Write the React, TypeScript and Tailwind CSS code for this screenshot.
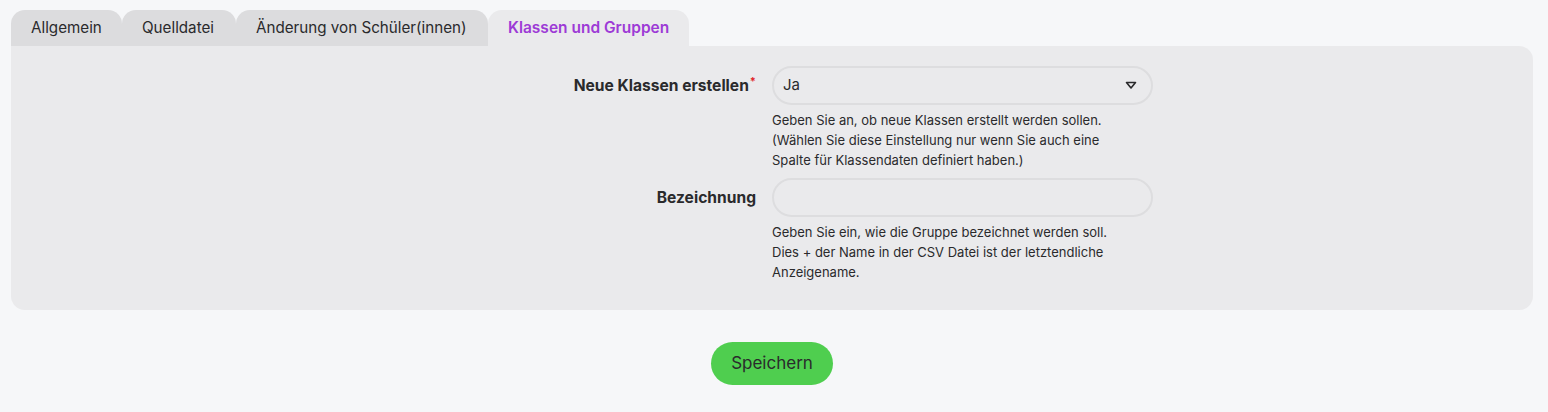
import { useState } from "react";

const tabs = [
  { name: "Allgemein", w: "w-[111px]" },
  { name: "Quelldatei", w: "w-[114px]" },
  { name: "Änderung von Schüler(innen)", w: "w-[252px]" },
  { name: "Klassen und Gruppen", w: "w-[201px]" },
];

function Field({ label, required, help, children }: { label: string; required?: boolean; help: string[]; children: React.ReactNode }) {
  return (
    <div className="grid grid-cols-2">
      <div className="flex h-[39px] items-center justify-end pr-4">
        <span className="text-[15.6px] font-bold text-[#2a2a2c]">
          {label}
          {required ? <sup className="ml-px text-[11px] text-[#e0262a]">*</sup> : null}
        </span>
      </div>
      <div className="w-[381px]">
        {children}
        <div className="mt-[5px] text-[13px] leading-5 text-[#2a2a2c]">
          {help.map((line) => <div key={line}>{line}</div>)}
        </div>
      </div>
    </div>
  );
}

export default function App() {
  const [active] = useState(3);
  return (
    <div className="min-h-[412px] bg-[#f6f7f9] pl-[11px] pr-[15px] pt-[10px] font-['Inter',sans-serif]">
      <div className="flex">
        {tabs.map((tab, i) => (
          <div key={tab.name} className={`flex h-9 items-center rounded-t-[14px] pl-5 ${tab.w} ${i === active ? "bg-[#eaeaec] text-[15.5px] font-semibold text-[#9d3bd6]" : "bg-[#dcdcde] text-[15.2px] text-[#2a2a2c]"}`}>
            {tab.name}
          </div>
        ))}
      </div>
      <div className="flex h-[264px] flex-col gap-2 rounded-b-[14px] rounded-tr-[14px] bg-[#eaeaec] pt-5">
        <Field label="Neue Klassen erstellen" required help={["Geben Sie an, ob neue Klassen erstellt werden sollen.", "(Wählen Sie diese Einstellung nur wenn Sie auch eine", "Spalte für Klassendaten definiert haben.)"]}>
          <div className="flex h-[39px] items-center justify-between rounded-full border-2 border-[#dddddf] px-[9px] text-[15px] text-[#2a2a2c]">
            <span>Ja</span>
            <svg width="12" height="9" viewBox="0 0 12 9" className="mr-[5px]"><path d="M1.5 1.5h9L6 7z" fill="none" stroke="#2a2a2c" strokeWidth="1.6" strokeLinejoin="round" /></svg>
          </div>
        </Field>
        <Field label="Bezeichnung" help={["Geben Sie ein, wie die Gruppe bezeichnet werden soll.", "Dies + der Name in der CSV Datei ist der letztendliche", "Anzeigename."]}>
          <input className="h-[39px] w-full rounded-full border-2 border-[#dddddf] bg-transparent px-3 text-[15px] outline-none" />
        </Field>
      </div>
      <div className="flex justify-center pt-8">
        <button className="h-[43px] w-[122px] rounded-full bg-[#4fce4f] text-[17px] text-[#2a2a2c]">Speichern</button>
      </div>
    </div>
  );
}
